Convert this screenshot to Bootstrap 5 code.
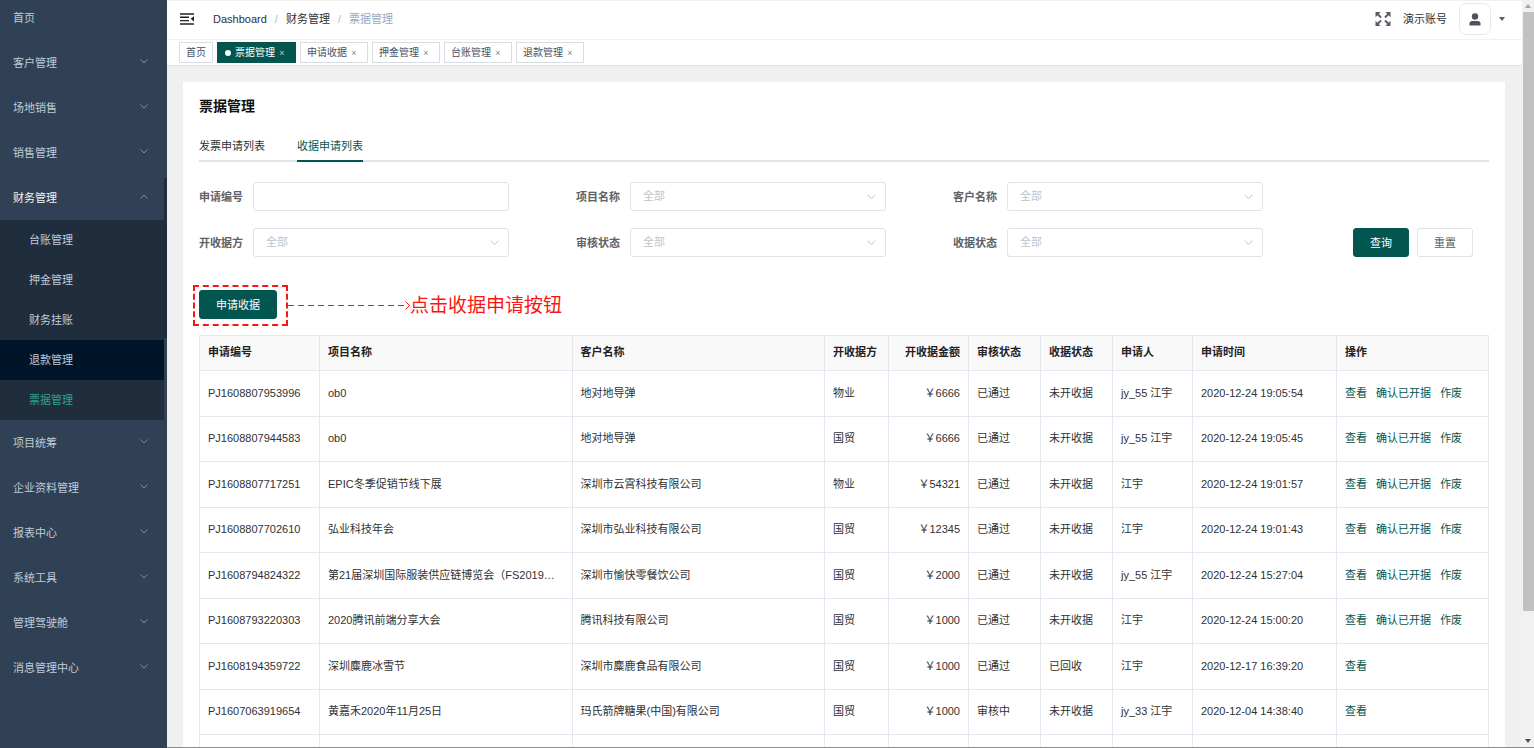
<!DOCTYPE html>
<html lang="zh-CN">
<head>
<meta charset="utf-8">
<meta name="viewport" content="width=device-width, initial-scale=1">
<title>票据管理</title>
<link href="https://cdn.jsdelivr.net/npm/bootstrap@5.3.0/dist/css/bootstrap.min.css" rel="stylesheet">
<style>
:root { --brand: #03564f; --line: #e4e7ed; --side: #304156; --side-dark: #1f2d3d; --note: #fb1414; }
body { font-family: "Liberation Sans", "Noto Sans CJK SC", sans-serif; font-size: 11px; line-height: 16px; color: #303133; }
a { text-decoration: none; }
button, input, select { font-family: inherit; }

/* sidebar */
.side { width: 167px; background: var(--side); }
.side-menu { margin-top: -5px; }
.side-link { height: 45px; padding: 0 16px 0 13px; color: #bfcbd9; }
.side-link.open { color: #f4f4f5; }
.side-link svg { margin: 0 0 3px; }
.side-sub { background: var(--side-dark); }
.side-sub a { height: 40px; padding-left: 29px; color: #bfcbd9; }
.side-sub a.hovered { background: #001528; }
.side-sub a.current { color: #2fa093; }
.side-rail { width: 3px; padding-top: 178px; }
.side-thumb { height: 160px; background: var(--side-dark); }

/* top bars */
.topbar { height: 40px; padding: 0 17px 2px 13px; border-top: 1px solid #f0f0f0; border-bottom: 1px solid #f0f1f3; }
.fold { margin-right: 19px; }
.crumbs { --bs-breadcrumb-divider-color: #b4b9c4; --bs-breadcrumb-item-padding-x: 8px; }
.crumbs a { color: #303133; }
.crumbs .active { color: #97a8be; }
.avatar { width: 32px; height: 32px; border: 1px solid #e6e8eb; border-radius: 7px; background: #fff; }
.tagbar { height: 26px; gap: 4px; padding: 0 12px; border-bottom: 1px solid #dfe2ea; }
.tag { height: 21px; padding: 0 6px; font-size: 10px; color: #495060; border: 1px solid #d8dce5; background: #fff; }
.tag.current { color: #fff; background: var(--brand); border-color: var(--brand); }
.tag-dot { width: 6px; height: 6px; margin: 0 4px 0 1px; border-radius: 50%; background: #fff; }
.tag-close { width: 14px; padding: 0; border: 0; background: none; color: inherit; font-size: 9px; opacity: .7; }

/* page body */
.content { background: #f0f0f0; padding: 16px 17px 0 16px; }
.panel { background: #fff; padding: 16px 16px 0; }
.panel h1 { font-size: 14px; line-height: 16px; font-weight: 700; color: #111; margin-bottom: 24px; }
.view-tabs { gap: 32px; border-bottom: 2px solid #e1e6ec; margin-bottom: 20px; }
.view-tabs a { height: 24px; color: #303133; margin-bottom: -2px; border-bottom: 2px solid transparent; }
.view-tabs a.active { color: var(--brand); border-color: var(--brand); }
.filters { display: grid; grid-template-columns: 377fr 377fr 377fr 159fr; row-gap: 17px; margin-bottom: 28px; }
.filters label { width: 54px; font-weight: 700; color: #606266; }
.field { flex: 1; margin-right: 67px; }
.field .form-control, .field .form-select { height: 29px; padding: 0 12px; font-size: 11px; color: #c0c4cc; border: 1px solid #dfe2e8; border-radius: 3px; }
.field .form-select { background: #fff url("data:image/svg+xml,%3Csvg xmlns='http://www.w3.org/2000/svg' width='9' height='6'%3E%3Cpath d='M.7.7 4.5 4.7 8.3.7' fill='none' stroke='%23c0c4cc'/%3E%3C/svg%3E") no-repeat right 9px center / 9px 6px; }
.act { height: 29px; padding: 0 16px; font-size: 11px; line-height: 16px; border-radius: 3px; --bs-btn-border-color: #dfe2e8; --bs-btn-color: #606266; }
.act-main { --bs-btn-bg: var(--brand); --bs-btn-border-color: var(--brand); --bs-btn-color: #fff; --bs-btn-hover-bg: #04685f; --bs-btn-hover-color: #fff; }

/* guide note beside the button */
.guide { margin: 0 0 9px -6px; color: var(--note); font-size: 19px; line-height: 24px; }
.guide-frame { border: 2px dashed var(--note); padding: 3px 9px 5px 4px; }
.guide-line { width: 117px; height: 1px; background: repeating-linear-gradient(90deg, var(--note) 0 6px, transparent 6px 10px); }

/* table */
.grid-table { table-layout: fixed; border-collapse: separate; border-spacing: 0; border: solid var(--line); border-width: 1px 0 0 1px; margin: 0; color: #303133; }
.grid-table th, .grid-table td { height: 46px; padding: 0 8px 2px; border: solid var(--line); border-width: 0 1px 1px 0; vertical-align: middle; white-space: nowrap; }
.grid-table tr:nth-child(even) td { height: 45px; }
.grid-table th { height: 35px; background: #f9f9fa; color: #1f2124; font-weight: 700; }
.grid-table td a { color: var(--brand); margin-right: 6px; }

/* page scrollbar */
.rail { width: 12px; background: #f1f1f1; padding: 4px 0; }
.rail-thumb { height: 81%; width: 11px; background: #c1c1c1; }
.edge { border-bottom: 1px solid #8f8f8f; }
</style>
</head>
<body>
<div class="d-flex vh-100 overflow-hidden">
  <aside class="side d-flex flex-shrink-0">
    <nav class="side-menu flex-grow-1">
      <a class="side-link d-flex align-items-center" href="#">首页</a>
      <a class="side-link d-flex align-items-center justify-content-between" href="#">客户管理<svg width="8" height="5"><use href="#down"/></svg></a>
      <a class="side-link d-flex align-items-center justify-content-between" href="#">场地销售<svg width="8" height="5"><use href="#down"/></svg></a>
      <a class="side-link d-flex align-items-center justify-content-between" href="#">销售管理<svg width="8" height="5"><use href="#down"/></svg></a>
      <a class="side-link open d-flex align-items-center justify-content-between" href="#">财务管理<svg width="8" height="5"><use href="#up"/></svg></a>
      <div class="side-sub">
        <a class="d-flex align-items-center" href="#">台账管理</a>
        <a class="d-flex align-items-center" href="#">押金管理</a>
        <a class="d-flex align-items-center" href="#">财务挂账</a>
        <a class="hovered d-flex align-items-center" href="#">退款管理</a>
        <a class="current d-flex align-items-center" href="#">票据管理</a>
      </div>
      <a class="side-link d-flex align-items-center justify-content-between" href="#">项目统筹<svg width="8" height="5"><use href="#down"/></svg></a>
      <a class="side-link d-flex align-items-center justify-content-between" href="#">企业资料管理<svg width="8" height="5"><use href="#down"/></svg></a>
      <a class="side-link d-flex align-items-center justify-content-between" href="#">报表中心<svg width="8" height="5"><use href="#down"/></svg></a>
      <a class="side-link d-flex align-items-center justify-content-between" href="#">系统工具<svg width="8" height="5"><use href="#down"/></svg></a>
      <a class="side-link d-flex align-items-center justify-content-between" href="#">管理驾驶舱<svg width="8" height="5"><use href="#down"/></svg></a>
      <a class="side-link d-flex align-items-center justify-content-between" href="#">消息管理中心<svg width="8" height="5"><use href="#down"/></svg></a>
    </nav>
    <div class="side-rail"><div class="side-thumb"></div></div>
  </aside>

  <main class="edge d-flex flex-column flex-grow-1 overflow-hidden">
    <header class="topbar d-flex align-items-center flex-shrink-0">
      <svg class="fold" width="14" height="12" fill="none" stroke="#222" stroke-width="1.4" aria-label="收起菜单"><path d="M0 1h14M0 4.3h9M0 7.6h9M0 11h14"/><path d="M14 3.2v5.2L10.6 5.8z" fill="#222" stroke="none"/></svg>
      <nav aria-label="breadcrumb">
        <ol class="breadcrumb crumbs mb-0">
          <li class="breadcrumb-item"><a href="#">Dashboard</a></li>
          <li class="breadcrumb-item"><a href="#">财务管理</a></li>
          <li class="breadcrumb-item active" aria-current="page">票据管理</li>
        </ol>
      </nav>
      <div class="d-flex align-items-center ms-auto">
        <svg width="16" height="16" viewBox="0 0 16 16" fill="#5a5e66" stroke="#5a5e66" stroke-width="2"><g id="arm"><path d="M.5 1h5.2L.5 6.200z" stroke="none"/><path d="M2 2.500 6 6.500"/></g><use href="#arm" transform="matrix(-1 0 0 1 16 0)"/><use href="#arm" transform="matrix(1 0 0 -1 0 16)"/><use href="#arm" transform="matrix(-1 0 0 -1 16 16)"/></svg>
        <span class="mx-2 px-1">演示账号</span>
        <button class="avatar p-0 d-flex align-items-center justify-content-center" type="button" aria-label="账号">
          <svg width="12" height="13" fill="#4d525b"><circle cx="6" cy="3.500" r="3.200"/><path d="M.5 12.500V10.600Q.5 8 3.300 8h5.400q2.800 0 2.800 2.600v1.900z"/></svg>
        </button>
        <svg class="ms-2" width="6" height="4" fill="#5a5e66"><path d="M0 0h6L3 4z"/></svg>
      </div>
    </header>

    <nav class="tagbar d-flex align-items-center flex-shrink-0">
      <a class="tag d-flex align-items-center" href="#">首页</a>
      <div class="tag current d-flex align-items-center"><span class="tag-dot"></span>票据管理<button class="tag-close" type="button" aria-label="关闭">×</button></div>
      <div class="tag d-flex align-items-center">申请收据<button class="tag-close" type="button" aria-label="关闭">×</button></div>
      <div class="tag d-flex align-items-center">押金管理<button class="tag-close" type="button" aria-label="关闭">×</button></div>
      <div class="tag d-flex align-items-center">台账管理<button class="tag-close" type="button" aria-label="关闭">×</button></div>
      <div class="tag d-flex align-items-center">退款管理<button class="tag-close" type="button" aria-label="关闭">×</button></div>
    </nav>

    <div class="content flex-grow-1 overflow-hidden">
      <section class="panel">
        <h1>票据管理</h1>
        <nav class="view-tabs d-flex">
          <a href="#">发票申请列表</a>
          <a class="active" href="#">收据申请列表</a>
        </nav>

        <form class="filters">
          <div class="d-flex align-items-center"><label for="f-no">申请编号</label><div class="field"><input id="f-no" class="form-control" type="text"></div></div>
          <div class="d-flex align-items-center"><label for="f-project">项目名称</label><div class="field"><select id="f-project" class="form-select"><option>全部</option></select></div></div>
          <div class="d-flex align-items-center"><label for="f-client">客户名称</label><div class="field"><select id="f-client" class="form-select"><option>全部</option></select></div></div>
          <div></div>
          <div class="d-flex align-items-center"><label for="f-issuer">开收据方</label><div class="field"><select id="f-issuer" class="form-select"><option>全部</option></select></div></div>
          <div class="d-flex align-items-center"><label for="f-audit">审核状态</label><div class="field"><select id="f-audit" class="form-select"><option>全部</option></select></div></div>
          <div class="d-flex align-items-center"><label for="f-state">收据状态</label><div class="field"><select id="f-state" class="form-select"><option>全部</option></select></div></div>
          <div class="d-flex align-items-center justify-content-end gap-2 pe-3">
            <button class="btn act act-main" type="button">查询</button>
            <button class="btn act" type="reset">重置</button>
          </div>
        </form>

        <div class="guide d-flex align-items-center">
          <div class="guide-frame d-flex"><button class="btn act act-main" type="button">申请收据</button></div>
          <div class="guide-line"></div>
          <svg width="5" height="9" fill="none" stroke="#fb1414"><path d="M.5.5l4 4-4 4"/></svg>
          <span>点击收据申请按钮</span>
        </div>

        <table class="table grid-table">
          <colgroup><col style="width:120px"><col><col><col style="width:64px"><col style="width:80px"><col style="width:72px"><col style="width:72px"><col style="width:80px"><col style="width:144px"><col style="width:152px"></colgroup>
          <thead>
            <tr><th>申请编号</th><th>项目名称</th><th>客户名称</th><th>开收据方</th><th class="text-end">开收据金额</th><th>审核状态</th><th>收据状态</th><th>申请人</th><th>申请时间</th><th>操作</th></tr>
          </thead>
          <tbody>
            <tr><td>PJ1608807953996</td><td>ob0</td><td>地对地导弹</td><td>物业</td><td class="text-end">￥6666</td><td>已通过</td><td>未开收据</td><td>jy_55 江宇</td><td>2020-12-24 19:05:54</td><td><a href="#">查看</a> <a href="#">确认已开据</a> <a href="#">作废</a></td></tr>
            <tr><td>PJ1608807944583</td><td>ob0</td><td>地对地导弹</td><td>国贸</td><td class="text-end">￥6666</td><td>已通过</td><td>未开收据</td><td>jy_55 江宇</td><td>2020-12-24 19:05:45</td><td><a href="#">查看</a> <a href="#">确认已开据</a> <a href="#">作废</a></td></tr>
            <tr><td>PJ1608807717251</td><td>EPIC冬季促销节线下展</td><td>深圳市云霄科技有限公司</td><td>物业</td><td class="text-end">￥54321</td><td>已通过</td><td>未开收据</td><td>江宇</td><td>2020-12-24 19:01:57</td><td><a href="#">查看</a> <a href="#">确认已开据</a> <a href="#">作废</a></td></tr>
            <tr><td>PJ1608807702610</td><td>弘业科技年会</td><td>深圳市弘业科技有限公司</td><td>国贸</td><td class="text-end">￥12345</td><td>已通过</td><td>未开收据</td><td>江宇</td><td>2020-12-24 19:01:43</td><td><a href="#">查看</a> <a href="#">确认已开据</a> <a href="#">作废</a></td></tr>
            <tr><td>PJ1608794824322</td><td>第21届深圳国际服装供应链博览会（FS2019…</td><td>深圳市愉快零餐饮公司</td><td>国贸</td><td class="text-end">￥2000</td><td>已通过</td><td>未开收据</td><td>jy_55 江宇</td><td>2020-12-24 15:27:04</td><td><a href="#">查看</a> <a href="#">确认已开据</a> <a href="#">作废</a></td></tr>
            <tr><td>PJ1608793220303</td><td>2020腾讯前端分享大会</td><td>腾讯科技有限公司</td><td>国贸</td><td class="text-end">￥1000</td><td>已通过</td><td>未开收据</td><td>江宇</td><td>2020-12-24 15:00:20</td><td><a href="#">查看</a> <a href="#">确认已开据</a> <a href="#">作废</a></td></tr>
            <tr><td>PJ1608194359722</td><td>深圳麋鹿冰雪节</td><td>深圳市麋鹿食品有限公司</td><td>国贸</td><td class="text-end">￥1000</td><td>已通过</td><td>已回收</td><td>江宇</td><td>2020-12-17 16:39:20</td><td><a href="#">查看</a></td></tr>
            <tr><td>PJ1607063919654</td><td>黄嘉禾2020年11月25日</td><td>玛氏箭牌糖果(中国)有限公司</td><td>国贸</td><td class="text-end">￥1000</td><td>审核中</td><td>未开收据</td><td>jy_33 江宇</td><td>2020-12-04 14:38:40</td><td><a href="#">查看</a></td></tr>
            <tr><td></td><td></td><td></td><td></td><td></td><td></td><td></td><td></td><td></td><td></td></tr>
          </tbody>
        </table>
      </section>
    </div>
  </main>

  <div class="rail edge d-flex flex-column align-items-end flex-shrink-0" aria-hidden="true">
    <svg class="mb-1 mx-auto flex-shrink-0" width="6" height="4" fill="#a3a3a3"><path d="M0 4h6L3 0z"/></svg>
    <div class="rail-thumb"></div>
    <svg class="mt-auto mx-auto flex-shrink-0" width="6" height="4" fill="#505050"><path d="M0 0h6L3 4z"/></svg>
  </div>
</div>

<svg class="d-none">
  <symbol id="down" viewBox="0 0 8 5"><path d="M.5.5 4 4 7.500.5" fill="none" stroke="#8794a4" stroke-width=".9"/></symbol>
  <symbol id="up" viewBox="0 0 8 5"><path d="M.5 4.500 4 1l3.500 3.500" fill="none" stroke="#8794a4" stroke-width=".9"/></symbol>
</svg>
<script src="https://cdn.jsdelivr.net/npm/bootstrap@5.3.0/dist/js/bootstrap.bundle.min.js"></script>
</body>
</html>
